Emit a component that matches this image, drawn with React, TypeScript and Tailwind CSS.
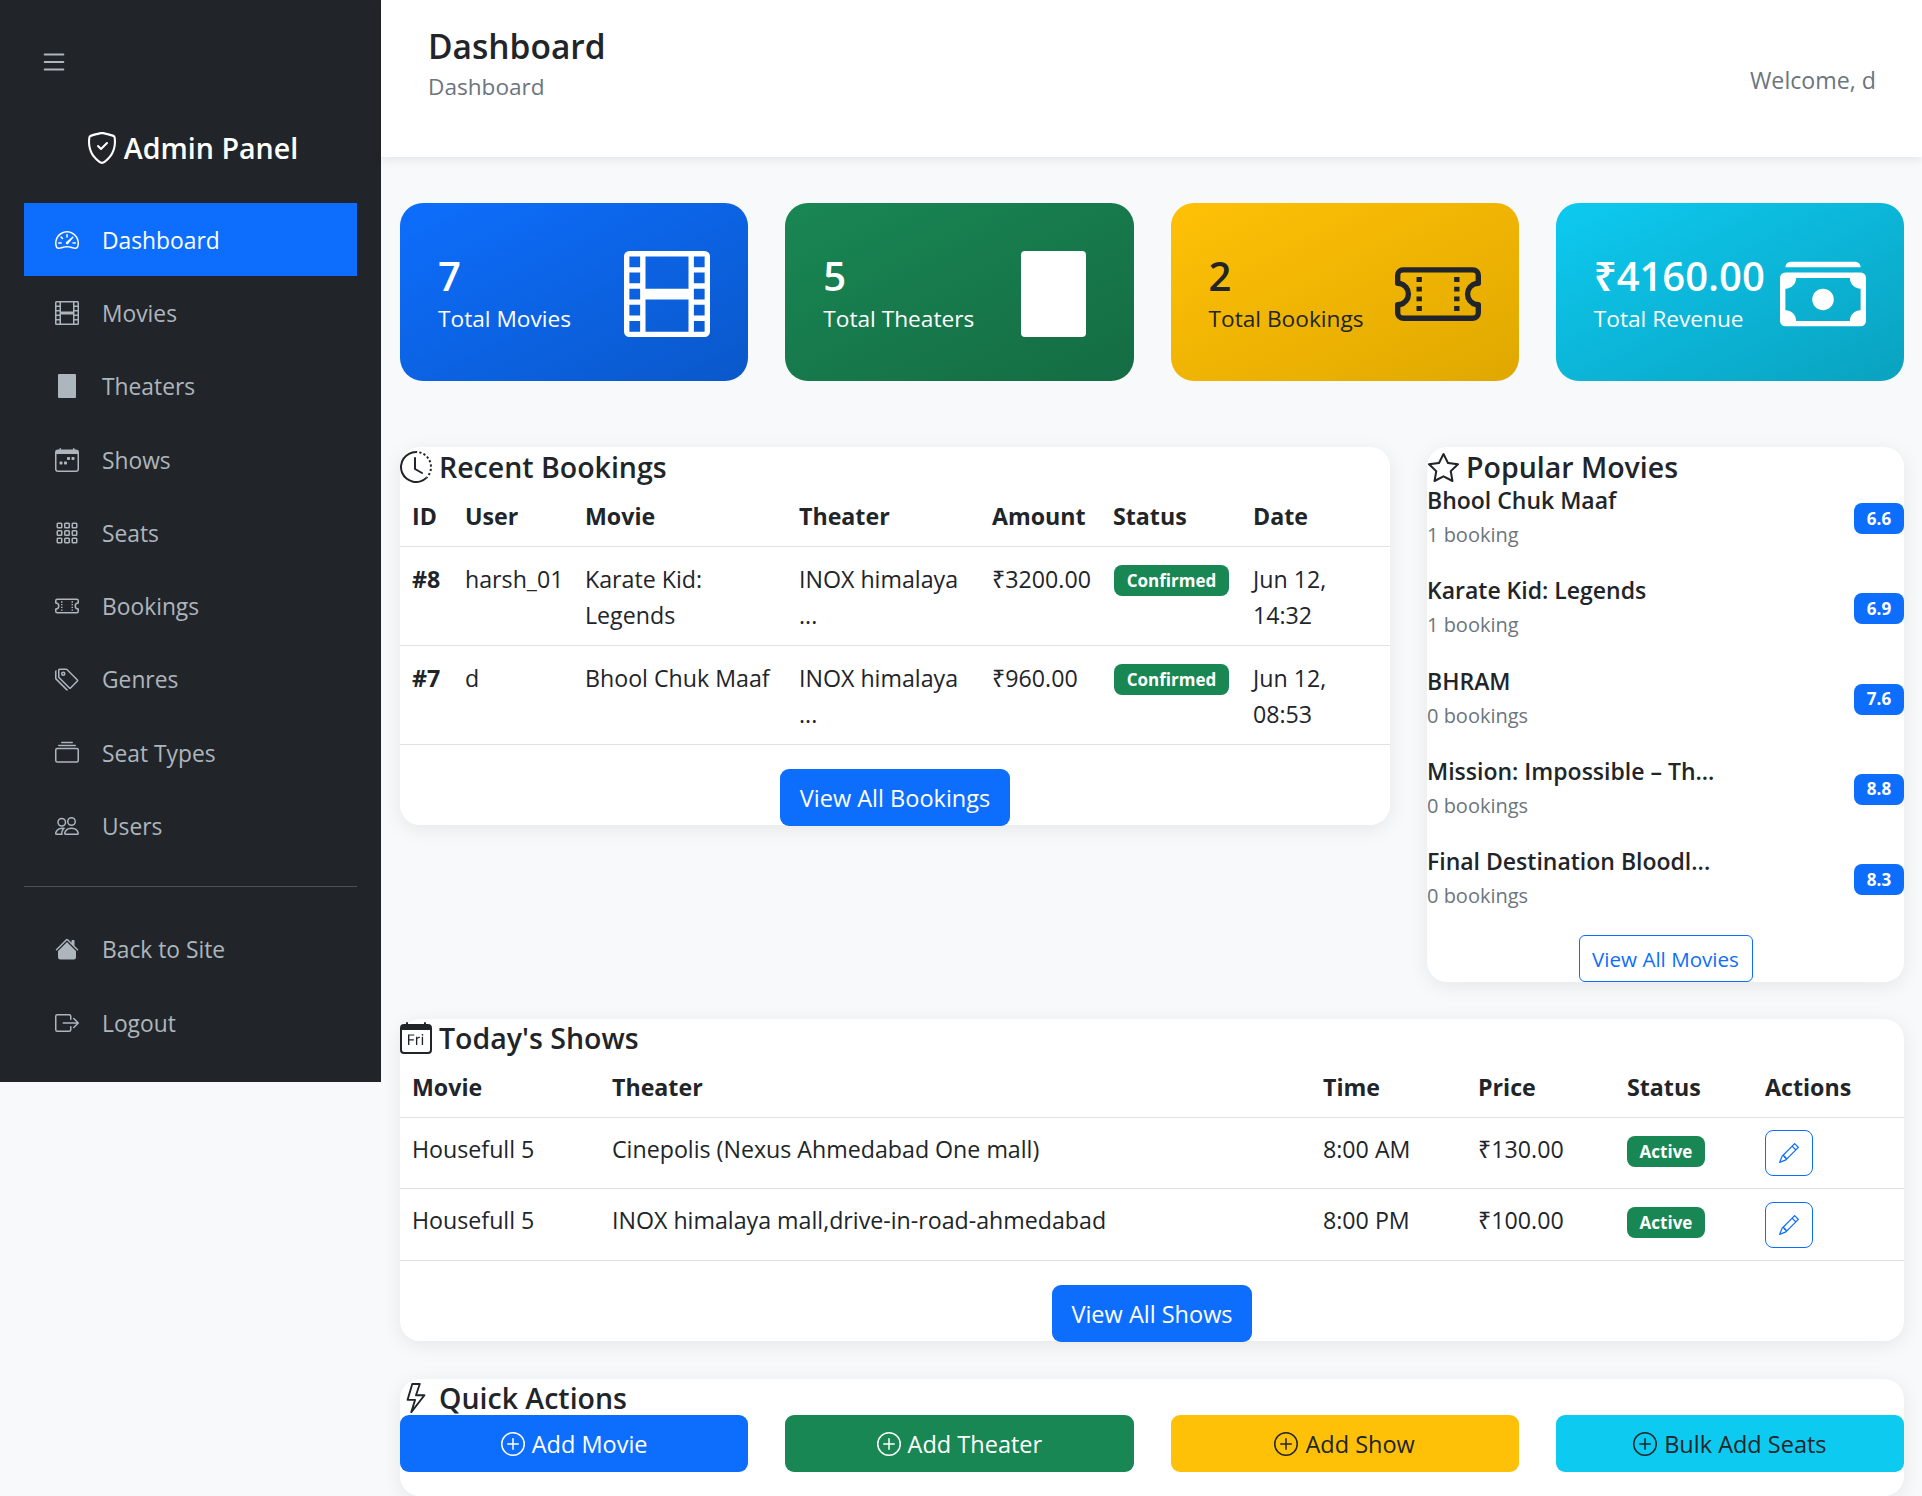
import type { ReactNode } from "react";
import {
  BsList,
  BsShieldCheck,
  BsSpeedometer2,
  BsFilm,
  BsCalendarWeek,
  BsGrid3X3Gap,
  BsTicketPerforated,
  BsTags,
  BsCollection,
  BsPeople,
  BsHouseFill,
  BsBoxArrowRight,
  BsCashStack,
  BsClockHistory,
  BsStar,
  BsCalendarDay,
  BsLightning,
  BsPlusCircle,
  BsPencil,
} from "react-icons/bs";

const nav = [
  { label: "Dashboard", icon: <BsSpeedometer2 size={24} />, active: true },
  { label: "Movies", icon: <BsFilm size={24} /> },
  { label: "Theaters", icon: <div className="w-[18px] h-[24px] rounded-[1px] bg-[#adb5bd]" /> },
  { label: "Shows", icon: <BsCalendarWeek size={24} /> },
  { label: "Seats", icon: <BsGrid3X3Gap size={24} /> },
  { label: "Bookings", icon: <BsTicketPerforated size={24} /> },
  { label: "Genres", icon: <BsTags size={24} /> },
  { label: "Seat Types", icon: <BsCollection size={24} /> },
  { label: "Users", icon: <BsPeople size={24} /> },
];

const popular = [
  { name: "Bhool Chuk Maaf", sub: "1 booking", rating: "6.6" },
  { name: "Karate Kid: Legends", sub: "1 booking", rating: "6.9" },
  { name: "BHRAM", sub: "0 bookings", rating: "7.6" },
  { name: "Mission: Impossible – Th...", sub: "0 bookings", rating: "8.8" },
  { name: "Final Destination Bloodl...", sub: "0 bookings", rating: "8.3" },
];

function NavItem({ icon, label, active }: { icon: ReactNode; label: string; active?: boolean }) {
  return (
    <a
      className={
        active
          ? "flex items-center h-[73.3px] pl-[31px] bg-[#0d6efd] text-white text-[22.8px]"
          : "flex items-center h-[73.3px] pl-[31px] text-[#adb5bd] text-[22.8px]"
      }
    >
      <span className="flex w-[24px] justify-center">{icon}</span>
      <span className="ml-[23px] pt-[2px]">{label}</span>
    </a>
  );
}

function Stat({ value, label, icon, className }: { value: string; label: string; icon: ReactNode; className: string }) {
  return (
    <div className={"flex items-center justify-between h-[178px] pl-[38px] pr-[38px] rounded-[23px] " + className}>
      <div className="mt-[3px]">
        <div className="text-[40px] leading-[50px] font-semibold">{value}</div>
        <div className="leading-[36px] text-[22.7px]">{label}</div>
      </div>
      <div className="mt-[4px]">{icon}</div>
    </div>
  );
}

function CardTitle({ icon, title, short }: { icon: ReactNode; title: string; short?: boolean }) {
  return (
    <div
      className={
        short
          ? "flex items-center h-[38px] text-[28.5px] font-semibold leading-[38px] text-[#212529]"
          : "flex items-center h-[40px] text-[28.5px] font-semibold leading-[40px] text-[#212529]"
      }
    >
      <span className="flex w-[32px] justify-center mr-[7px]">{icon}</span>
      {title}
    </div>
  );
}

function Badge({ text, className }: { text: string; className: string }) {
  return (
    <span className={"inline-flex items-center justify-center h-[31px] rounded-[8px] text-white text-[17px] font-bold " + className}>
      {text}
    </span>
  );
}

const th = "text-left font-bold pt-[11px] pb-[12px] pl-[12px] border-b border-[#dee2e6]";
const td = "align-top pl-[12px] pt-[14px] pb-[12px] border-b border-[#dee2e6] whitespace-nowrap";
const td2 = "align-top pl-[12px] pt-[13px] pb-[12px] border-b border-[#dee2e6] whitespace-nowrap";

function EditButton() {
  return (
    <button className="flex items-center justify-center w-[48px] h-[46px] rounded-[8px] border border-[#0d6efd] text-[#0d6efd]">
      <BsPencil size={20} />
    </button>
  );
}

export default function App() {
  return (
    <div className="flex w-full h-[1496px] overflow-hidden bg-[#f8f9fa] text-[#212529] text-[23.2px] leading-[36px] font-['Open_Sans','Noto_Sans',sans-serif]">
      <aside className="w-[381px] h-[1082px] shrink-0 bg-[#212529] px-[24px]">
        <div className="pt-[47px] pl-[15px] h-[122px] text-[#adb5bd]">
          <BsList size={30} />
        </div>
        <div className="flex items-center justify-center h-[52px] mb-[29px] pl-[3px] text-white text-[28.6px] font-semibold">
          <BsShieldCheck size={32} className="mr-[6px]" />
          Admin Panel
        </div>
        {nav.map((n) => (
          <NavItem key={n.label} icon={n.icon} label={n.label} active={n.active} />
        ))}
        <div className="mt-[23px] mb-[26px] border-t border-[#4c5157]" />
        <NavItem icon={<BsHouseFill size={24} />} label="Back to Site" />
        <NavItem icon={<BsBoxArrowRight size={24} />} label="Logout" />
      </aside>

      <main className="flex-1 min-w-0">
        <header className="relative flex items-center justify-between h-[157px] bg-white pl-[47px] pr-[46px] shadow-[0_3px_9px_rgba(0,0,0,0.08)]">
          <div className="mt-[-33px]">
            <h1 className="text-[33.5px] leading-[50px] font-semibold">Dashboard</h1>
            <div className="text-[#6c757d] text-[22.6px] leading-[32px]">Dashboard</div>
          </div>
          <div className="text-[#6c757d] mt-[2px]">Welcome, d</div>
        </header>

        <div className="pt-[46px] pl-[19px] pr-[18px]">
          <div className="grid grid-cols-4 gap-x-[37px] mb-[66px]">
            <Stat
              value="7"
              label="Total Movies"
              className="bg-linear-to-br from-[#0d6efd] to-[#0a58ca] text-white"
              icon={<BsFilm size={86} />}
            />
            <Stat
              value="5"
              label="Total Theaters"
              className="bg-linear-to-br from-[#198754] to-[#146c43] text-white"
              icon={<div className="w-[65px] h-[86px] mr-[10px] rounded-[4px] bg-white" />}
            />
            <Stat
              value="2"
              label="Total Bookings"
              className="bg-linear-to-br from-[#ffc107] to-[#e0a800] text-[#212529]"
              icon={<BsTicketPerforated size={86} />}
            />
            <Stat
              value="₹4160.00"
              label="Total Revenue"
              className="bg-linear-to-br from-[#0dcaf0] to-[#0aa2c0] text-white"
              icon={<BsCashStack size={86} />}
            />
          </div>

          <div className="flex items-start gap-x-[37px] mb-[37px]">
            <section className="w-[990px] h-[378px] rounded-[20px] bg-white shadow-[0_4px_20px_rgba(0,0,0,0.08)]">
              <CardTitle icon={<BsClockHistory size={32} />} title="Recent Bookings" />
              <table className="w-full table-fixed border-collapse">
                <colgroup>
                  <col className="w-[53px]" />
                  <col className="w-[120px]" />
                  <col className="w-[214px]" />
                  <col className="w-[193px]" />
                  <col className="w-[121px]" />
                  <col className="w-[140px]" />
                  <col className="w-[149px]" />
                </colgroup>
                <thead>
                  <tr>
                    <th className={th}>ID</th>
                    <th className={th}>User</th>
                    <th className={th}>Movie</th>
                    <th className={th}>Theater</th>
                    <th className={th}>Amount</th>
                    <th className={th}>Status</th>
                    <th className={th}>Date</th>
                  </tr>
                </thead>
                <tbody>
                  <tr>
                    <td className={td + " font-bold"}>#8</td>
                    <td className={td}>harsh_01</td>
                    <td className={td}>Karate Kid:<br />Legends</td>
                    <td className={td}>INOX himalaya<br />...</td>
                    <td className={td}>₹3200.00</td>
                    <td className={td}><Badge text="Confirmed" className="w-[115px] ml-[1px] bg-[#198754] align-top mt-[4px]" /></td>
                    <td className={td}>Jun 12,<br />14:32</td>
                  </tr>
                  <tr>
                    <td className={td + " font-bold"}>#7</td>
                    <td className={td}>d</td>
                    <td className={td}>Bhool Chuk Maaf</td>
                    <td className={td}>INOX himalaya<br />...</td>
                    <td className={td}>₹960.00</td>
                    <td className={td}><Badge text="Confirmed" className="w-[115px] ml-[1px] bg-[#198754] align-top mt-[4px]" /></td>
                    <td className={td}>Jun 12,<br />08:53</td>
                  </tr>
                </tbody>
              </table>
              <div className="flex justify-center pt-[24px]">
                <button className="w-[230px] h-[57px] rounded-[9px] bg-[#0d6efd] text-white text-[23.5px]">View All Bookings</button>
              </div>
            </section>

            <section className="w-[477px] h-[535px] rounded-[20px] bg-white shadow-[0_4px_20px_rgba(0,0,0,0.08)]">
              <div className="h-[35px]">
                <CardTitle icon={<BsStar size={31} />} title="Popular Movies" />
              </div>
              {popular.map((p) => (
                <div key={p.name} className="flex items-center justify-between h-[70px] mb-[20.3px]">
                  <div>
                    <div className="font-semibold text-[23px] leading-[36px]">{p.name}</div>
                    <div className="text-[#6c757d] text-[20px] leading-[34px]">{p.sub}</div>
                  </div>
                  <Badge text={p.rating} className="w-[50px] mt-[3px] bg-[#0d6efd]" />
                </div>
              ))}
              <div className="flex justify-center mt-[22.3px]">
                <button className="w-[174px] h-[47px] rounded-[6px] border border-[#0d6efd] text-[#0d6efd] text-[20.6px]">
                  View All Movies
                </button>
              </div>
            </section>
          </div>

          <section className="h-[322px] mb-[38px] rounded-[20px] bg-white shadow-[0_4px_20px_rgba(0,0,0,0.08)]">
            <div className="h-[39px]">
              <CardTitle short icon={<BsCalendarDay size={32} />} title="Today's Shows" />
            </div>
            <table className="w-full table-fixed border-collapse">
              <colgroup>
                <col className="w-[200px]" />
                <col className="w-[711px]" />
                <col className="w-[155px]" />
                <col className="w-[149px]" />
                <col className="w-[138px]" />
                <col className="w-[151px]" />
              </colgroup>
              <thead>
                <tr>
                  <th className={th}>Movie</th>
                  <th className={th}>Theater</th>
                  <th className={th}>Time</th>
                  <th className={th}>Price</th>
                  <th className={th}>Status</th>
                  <th className={th}>Actions</th>
                </tr>
              </thead>
              <tbody>
                <tr>
                  <td className={td2}>Housefull 5</td>
                  <td className={td2}>Cinepolis (Nexus Ahmedabad One mall)</td>
                  <td className={td2}>8:00 AM</td>
                  <td className={td2}>₹130.00</td>
                  <td className={td2}><Badge text="Active" className="w-[78px] bg-[#198754] align-top mt-[5px]" /></td>
                  <td className={"align-top pl-[12px] pt-[12px] pb-[12px] border-b border-[#dee2e6]"}><EditButton /></td>
                </tr>
                <tr>
                  <td className={td2}>Housefull 5</td>
                  <td className={td2}>INOX himalaya mall,drive-in-road-ahmedabad</td>
                  <td className={td2}>8:00 PM</td>
                  <td className={td2}>₹100.00</td>
                  <td className={td2}><Badge text="Active" className="w-[78px] bg-[#198754] align-top mt-[5px]" /></td>
                  <td className={"align-top pl-[12px] pt-[13px] pb-[12px] border-b border-[#dee2e6]"}><EditButton /></td>
                </tr>
              </tbody>
            </table>
            <div className="flex justify-center pt-[24px]">
              <button className="w-[200px] h-[57px] rounded-[9px] bg-[#0d6efd] text-white text-[23.5px]">View All Shows</button>
            </div>
          </section>

          <section className="h-[117px] rounded-[20px] bg-white shadow-[0_4px_20px_rgba(0,0,0,0.08)]">
            <div className="h-[36px]">
              <CardTitle short icon={<BsLightning size={30} />} title="Quick Actions" />
            </div>
            <div className="grid grid-cols-4 gap-x-[37px] text-[23.5px]">
              <button className="flex items-center justify-center gap-x-[7px] h-[57px] rounded-[9px] bg-[#0d6efd] text-white">
                <BsPlusCircle size={24} /> Add Movie
              </button>
              <button className="flex items-center justify-center gap-x-[7px] h-[57px] rounded-[9px] bg-[#198754] text-white">
                <BsPlusCircle size={24} /> Add Theater
              </button>
              <button className="flex items-center justify-center gap-x-[7px] h-[57px] rounded-[9px] bg-[#ffc107] text-[#212529]">
                <BsPlusCircle size={24} /> Add Show
              </button>
              <button className="flex items-center justify-center gap-x-[7px] h-[57px] rounded-[9px] bg-[#0dcaf0] text-[#212529]">
                <BsPlusCircle size={24} /> Bulk Add Seats
              </button>
            </div>
          </section>
        </div>
      </main>
    </div>
  );
}
